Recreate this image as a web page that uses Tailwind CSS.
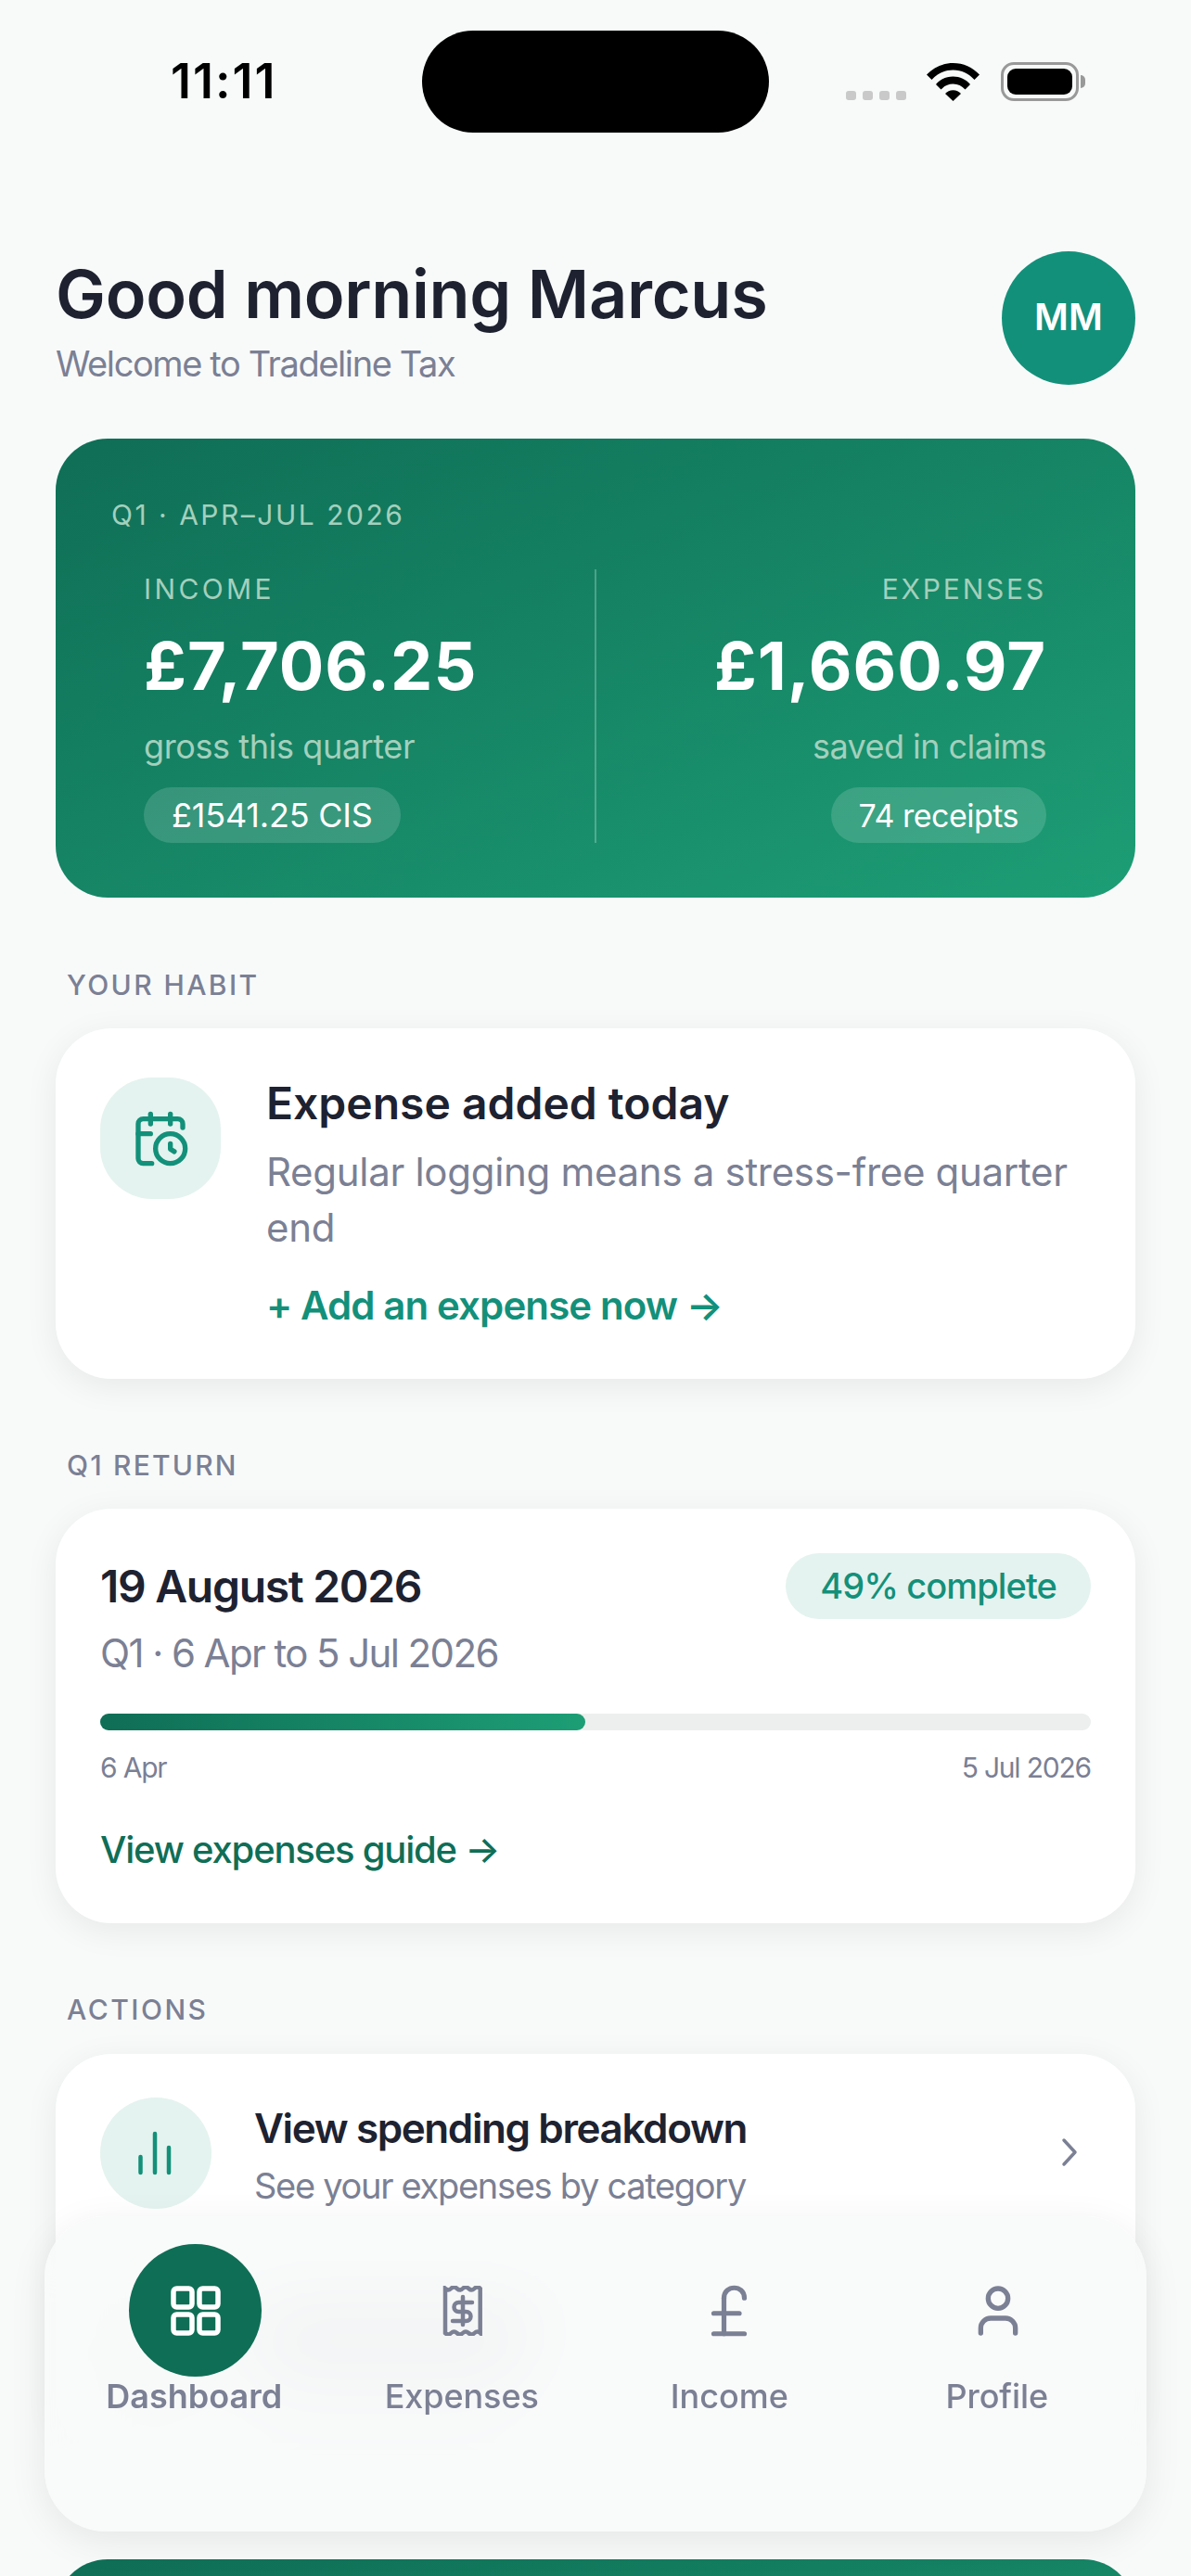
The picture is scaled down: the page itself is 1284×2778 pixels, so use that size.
<!DOCTYPE html>
<html lang="en">
<head>
    <meta charset="UTF-8">
    <meta name="viewport" content="width=device-width, initial-scale=1.0">
    <title>Tradeline Tax - Dashboard</title>
    <script src="https://cdn.jsdelivr.net/npm/@tailwindcss/browser@4"></script>
</head>
<body class="bg-[#f8fafa]">
    <div class="relative w-[1284px] h-[2778px] overflow-hidden bg-[#f8fafa] font-['Inter',sans-serif] text-[#1e2230]">

        <!-- Status bar -->
        <div class="flex items-center h-[143px] pt-[33px] pl-[184px]">
            <div class="w-[271px] text-[52px] leading-none font-semibold tracking-[2px] text-black">11:11</div>
            <div class="w-[374px] h-[110px] rounded-full bg-black"></div>
            <div class="flex items-end ml-[83px] h-[42px]">
                <div class="flex gap-[7px] mb-[1px]">
                    <span class="w-[11px] h-[10px] rounded-[3px] bg-[#c9c9c9]"></span>
                    <span class="w-[11px] h-[10px] rounded-[3px] bg-[#c9c9c9]"></span>
                    <span class="w-[11px] h-[10px] rounded-[3px] bg-[#c9c9c9]"></span>
                    <span class="w-[11px] h-[10px] rounded-[3px] bg-[#c9c9c9]"></span>
                </div>
                <svg class="ml-[22px]" width="57" height="41" viewBox="0 0 57 41" fill="#000">
                    <path d="M0 12.5C7.5 4.5 17.5 0 28.5 0S49.5 4.5 57 12.5L51.5 18C45.5 11.5 37.5 7.5 28.5 7.5S11.5 11.5 5.5 18Z"/>
                    <path d="M10 23C14.8 17.5 21 14.5 28.5 14.5S42.2 17.5 47 23L41.5 28.5C38 24.7 33.7 22.5 28.5 22.5S19 24.7 15.5 28.5Z"/>
                    <path d="M20 33C22.2 30.6 25 29.2 28.5 29.2S34.8 30.6 37 33L28.5 41Z"/>
                </svg>
                <div class="ml-[23px] flex items-center gap-[2px]">
                    <div class="w-[84px] h-[42px] rounded-[14px] border-[3px] border-[#999] bg-[#f8fafa] p-[4px]">
                        <div class="w-full h-full rounded-[9px] bg-black"></div>
                    </div>
                    <div class="w-[5px] h-[14px] rounded-r-full bg-[#999]"></div>
                </div>
            </div>
        </div>

        <main class="px-[60px]">
            <!-- Greeting -->
            <header class="flex justify-between mt-[128px]">
                <div>
                    <h1 class="text-[72px] leading-[92px] font-semibold tracking-[-0.3px]">Good morning Marcus</h1>
                    <p class="mt-[4px] text-[38px] leading-[50px] text-[#7b8094] tracking-[-1.4px]">Welcome to Tradeline Tax</p>
                </div>
                <div class="flex items-center justify-center w-[144px] h-[144px] pb-[2px] rounded-full bg-[#13907a] text-white text-[40px] font-semibold">MM</div>
            </header>

            <!-- Quarter summary -->
            <section class="mt-[56px] h-[495px] rounded-[56px] px-[60px] pt-[62px] bg-gradient-to-br from-[#0f6e56] to-[#1d9e75] text-white">
                <p class="text-[30px] leading-[40px] tracking-[2.5px] text-[#a3d0bd]">Q1 · APR–JUL 2026</p>
                <div class="flex mt-[39px] h-[295px]">
                    <div class="flex-1 flex flex-col items-start gap-[19px] pl-[35px] border-r-2 border-white/25">
                        <p class="text-[30px] leading-[42px] tracking-[3.4px] text-[#a3d0bd]">INCOME</p>
                        <p class="text-[72px] leading-[86px] font-bold tracking-[1px]">£7,706.25</p>
                        <p class="text-[36px] leading-[50px] text-[#a3d0bd] tracking-[-0.4px]">gross this quarter</p>
                        <span class="flex items-center h-[60px] px-[30px] rounded-full bg-white/15 text-[36px] tracking-[-0.2px]">£1541.25 CIS</span>
                    </div>
                    <div class="flex-1 flex flex-col items-end gap-[19px] pr-[36px]">
                        <p class="text-[30px] leading-[42px] tracking-[2.8px] text-[#a3d0bd]">EXPENSES</p>
                        <p class="text-[72px] leading-[86px] font-bold tracking-[1px]">£1,660.97</p>
                        <p class="text-[36px] leading-[50px] text-[#a3d0bd] tracking-[-0.55px]">saved in claims</p>
                        <span class="flex items-center h-[60px] px-[30px] rounded-full bg-white/15 text-[34px] tracking-[-0.5px]">74 receipts</span>
                    </div>
                </div>
            </section>

            <!-- Habit -->
            <h2 class="mt-[74px] pl-[12px] text-[30px] leading-[40px] font-medium tracking-[2.4px] text-[#7b8094]">YOUR HABIT</h2>
            <section class="flex gap-[49px] mt-[27px] h-[378px] rounded-[60px] bg-white px-[48px] pt-[51px] shadow-[0_8px_36px_rgba(0,0,0,0.07)]">
                <div class="flex items-center justify-center shrink-0 w-[130px] h-[131px] mt-[2px] rounded-[56px] bg-[#e4f3ef]">
                    <svg width="64" height="64" viewBox="0 0 24 24" fill="none" stroke="#13907a" stroke-width="2" stroke-linecap="round" stroke-linejoin="round">
                        <path d="M16 14v2.2l1.6 1"/><path d="M16 2v4"/><path d="M21 7.5V6a2 2 0 0 0-2-2H5a2 2 0 0 0-2 2v14a2 2 0 0 0 2 2h3.5"/><path d="M3 10h5"/><path d="M8 2v4"/><circle cx="16" cy="16" r="6"/>
                    </svg>
                </div>
                <div>
                    <h3 class="text-[48px] leading-[60px] font-semibold tracking-[0px]">Expense added today</h3>
                    <p class="mt-[14px] text-[42px] leading-[60px] text-[#7b8094] tracking-[-0.3px]">Regular logging means a stress-free quarter end</p>
                    <a class="block mt-[26px] text-[42px] leading-[56px] font-semibold text-[#13907a] tracking-[-0.9px]">+ Add an expense now →</a>
                </div>
            </section>

            <!-- Return progress -->
            <h2 class="mt-[73px] pl-[12px] text-[30px] leading-[40px] font-medium tracking-[2.2px] text-[#7b8094]">Q1 RETURN</h2>
            <section class="mt-[27px] h-[447px] rounded-[60px] bg-white px-[48px] pt-[48px] shadow-[0_8px_36px_rgba(0,0,0,0.07)]">
                <div class="flex items-center justify-between">
                    <h3 class="text-[48px] leading-[60px] font-semibold tracking-[-1.3px]">19 August 2026</h3>
                    <span class="flex items-center h-[71px] px-[37px] rounded-full bg-[#e4f3ef] text-[38px] font-medium text-[#13907a] tracking-[-0.9px]">49% complete</span>
                </div>
                <p class="mt-[9px] text-[42px] leading-[56px] text-[#7b8094] tracking-[-1.6px]">Q1 · 6 Apr to 5 Jul 2026</p>
                <div class="mt-[37px] h-[18px] rounded-full bg-[#ecefee]">
                    <div class="h-full rounded-full bg-gradient-to-r from-[#0f6e56] to-[#1d9e75]" style="width: 49%"></div>
                </div>
                <div class="flex justify-between mt-[20px] text-[30px] leading-[40px] text-[#7b8094] tracking-[-1.2px]">
                    <span>6 Apr</span>
                    <span>5 Jul 2026</span>
                </div>
                <a class="block mt-[41px] text-[40px] leading-[56px] font-medium text-[#0f6e56] tracking-[-1.2px]">View expenses guide →</a>
            </section>

            <!-- Actions -->
            <h2 class="mt-[73px] pl-[12px] text-[30px] leading-[40px] font-medium tracking-[2.5px] text-[#7b8094]">ACTIONS</h2>
            <section class="mt-[28px] h-[429px] rounded-[60px] bg-white px-[48px] pt-[47px] shadow-[0_8px_36px_rgba(0,0,0,0.07)]">
                <div class="flex items-start gap-[46px] h-[214px]">
                    <div class="flex items-center justify-center shrink-0 w-[120px] h-[120px] rounded-full bg-[#e4f3ef]">
                        <svg width="64" height="64" viewBox="0 0 64 64" fill="none" stroke="#13907a" stroke-width="4.5" stroke-linecap="round">
                            <path d="M15.500 53V36"/><path d="M31 53V11"/><path d="M46 53V26"/>
                        </svg>
                    </div>
                    <div class="flex-1 pt-[5px]">
                        <h3 class="text-[44px] leading-[56px] font-semibold tracking-[-1.4px]">View spending breakdown</h3>
                        <p class="mt-[9px] text-[38px] leading-[50px] text-[#7b8094] tracking-[-1.3px]">See your expenses by category</p>
                    </div>
                    <svg class="self-start mt-[41px] mr-[4px]" width="36" height="36" viewBox="0 0 36 36" fill="none" stroke="#7b8094" stroke-width="3.5" stroke-linecap="round" stroke-linejoin="round">
                        <path d="M11 5l12 13-12 13"/>
                    </svg>
                </div>
                <!-- next row, only visible blurred behind the nav -->
                <div class="flex items-start gap-[46px]">
                    <div class="shrink-0 w-[120px] h-[120px] rounded-full bg-[#e4f3ef]"></div>
                    <div class="pt-[18px]">
                        <div class="w-[300px] h-[34px] bg-[#1e2230]/60"></div>
                        <div class="mt-[26px] w-[280px] h-[26px] bg-[#7b8094]/60"></div>
                    </div>
                </div>
            </section>

            <section class="mt-[116px] h-[300px] rounded-[56px] bg-gradient-to-br from-[#0f6e56] to-[#1d9e75]"></section>
        </main>

        <!-- Bottom nav -->
        <nav class="absolute left-[48px] top-[2390px] w-[1188px] h-[340px] flex px-[17px] pt-[30px] rounded-[66px] bg-[#f8fafa]/90 backdrop-blur-[40px] shadow-[0_10px_40px_rgba(0,0,0,0.08)] text-[#7b8094]">
            <a class="flex-1 flex flex-col items-center">
                <div class="flex items-center justify-center w-[143px] h-[143px] ml-[3px] rounded-full bg-[#0f6e56]">
                    <svg width="54" height="54" viewBox="0 0 54 54" fill="none" stroke="#fff" stroke-width="5.5">
                        <rect x="3" y="3" width="20" height="20" rx="3.5"/><rect x="31" y="3" width="20" height="20" rx="3.5"/><rect x="3" y="31" width="20" height="20" rx="3.5"/><rect x="31" y="31" width="20" height="20" rx="3.5"/>
                    </svg>
                </div>
                <span class="-mt-[1px] text-[36px] leading-[44px] font-semibold tracking-[0px]">Dashboard</span>
            </a>
            <a class="flex-1 flex flex-col items-center">
                <div class="flex items-center justify-center h-[143px] ml-[3px]">
                    <svg width="44" height="54" viewBox="0 0 44 54" fill="none" stroke="#7b8094" stroke-width="4.5" stroke-linecap="round" stroke-linejoin="miter">
                        <path d="M3 3q3.200 3 6.300 0t6.300 0 6.300 0 6.300 0 6.300 0 6.200 0V51q-3.100-3-6.200 0t-6.300 0-6.300 0-6.300 0-6.300 0-6.300 0Z"/>
                        <path d="M22 12v30"/>
                        <path d="M32 18H17.500a5 5 0 0 0 0 10h8a5 5 0 0 1 0 10H11"/>
                    </svg>
                </div>
                <span class="-mt-[1px] text-[36px] leading-[44px] font-medium tracking-[-0.1px]">Expenses</span>
            </a>
            <a class="flex-1 flex flex-col items-center">
                <div class="flex items-center justify-center h-[143px]">
                    <svg width="66" height="66" viewBox="0 0 24 24" fill="none" stroke="#7b8094" stroke-width="1.9" stroke-linecap="round" stroke-linejoin="round">
                        <path d="M18 7c0-5.333-8-5.333-8 0"/><path d="M10 7v14"/><path d="M6 21h12"/><path d="M6 13h10"/>
                    </svg>
                </div>
                <span class="-mt-[1px] text-[36px] leading-[44px] font-medium tracking-[0px]">Income</span>
            </a>
            <a class="flex-1 flex flex-col items-center">
                <div class="flex items-center justify-center h-[143px] ml-[3px]">
                    <svg width="64" height="64" viewBox="0 0 24 24" fill="none" stroke="#7b8094" stroke-width="2" stroke-linecap="round" stroke-linejoin="round">
                        <path d="M19 21v-2a4 4 0 0 0-4-4H9a4 4 0 0 0-4 4v2"/><circle cx="12" cy="7" r="4"/>
                    </svg>
                </div>
                <span class="-mt-[1px] text-[36px] leading-[44px] font-medium tracking-[-0.1px]">Profile</span>
            </a>
        </nav>
    </div>
</body>
</html>
